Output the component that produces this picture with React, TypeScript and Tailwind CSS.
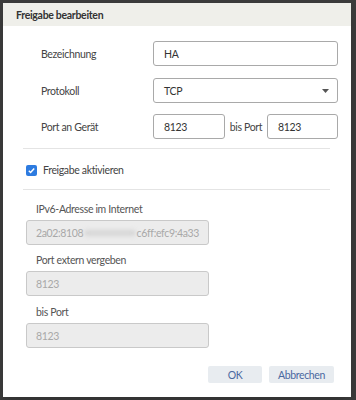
import React from 'react';

const font = { fontFamily: 'Lato, "Open Sans", sans-serif' };

function Field({ value, className = '' }: { value: string; className?: string }) {
  return (
    <div
      className={`flex h-[25px] items-center rounded-[3px] border border-[#a9a9a9] bg-white px-[10px] text-[#333] ${className}`}
    >
      {value}
    </div>
  );
}

function DisabledField({ children }: { children: React.ReactNode }) {
  return (
    <div className="flex h-[25px] w-[183px] items-center rounded-[3px] border border-[#c9c9c9] bg-[#ececec] px-[9px] text-[#a8a8a8]">
      {children}
    </div>
  );
}

export default function App() {
  return (
    <div
      className="h-[400px] w-[356px] bg-[#3b3b3b] p-[3px] pr-[5px] text-[10.5px] leading-[16px] tracking-[-0.35px]"
      style={font}
    >
      <div className="flex h-full flex-col bg-white shadow-lg">
        <div className="flex h-[23px] items-center bg-[#efefea] px-[13px] font-bold tracking-[-0.3px] text-[#333]">
          Freigabe bearbeiten
        </div>

        <div className="flex flex-col pl-[20px] pr-[13px] pt-[15px]">
          <div className="flex items-center">
            <span className="w-[130px] pl-[18px] text-[#444]">Bezeichnung</span>
            <Field value="HA" className="flex-1" />
          </div>
          <div className="mt-[12px] flex items-center">
            <span className="w-[130px] pl-[18px] text-[#444]">Protokoll</span>
            <div className="flex h-[25px] flex-1 items-center justify-between rounded-[3px] border border-[#a9a9a9] bg-white pl-[10px] pr-[8px] text-[#333]">
              TCP
              <svg width="7" height="4" viewBox="0 0 7 4">
                <path d="M0 0h7L3.5 4z" fill="#555" />
              </svg>
            </div>
          </div>
          <div className="mt-[11px] flex items-center">
            <span className="w-[130px] pl-[18px] text-[#444]">Port an Gerät</span>
            <Field value="8123" className="w-[72px]" />
            <span className="w-[42px] text-center text-[#444]">bis Port</span>
            <Field value="8123" className="flex-1" />
          </div>

          <div className="mt-[9px] mr-[8px] border-t border-[#e4e4e4]" />

          <div className="flex h-[40px] items-center gap-[6px] pt-[2px] pl-[3px]">
            <span className="flex h-[11px] w-[11px] items-center justify-center rounded-[2px] bg-[#2d7be0]">
              <svg width="9" height="9" viewBox="0 0 10 10">
                <path d="M2 5.2l2 2 4-4.4" fill="none" stroke="white" strokeWidth="1.6" />
              </svg>
            </span>
            <span className="text-[#444]">Freigabe aktivieren</span>
          </div>

          <div className="mr-[8px] border-t border-[#e4e4e4]" />

          <div className="mt-[11px] pl-[13px] text-[#555]">IPv6-Adresse im Internet</div>
          <div className="mt-[3px] pl-[3px]">
            <DisabledField>
              2a02:8108
              <span className="mx-[1px] inline-block h-[6px] w-[62px] rounded-full bg-[#d6d6d6] blur-[2px]" />
              c6ff:efc9:4a33
            </DisabledField>
          </div>

          <div className="mt-[7px] pl-[13px] text-[#555]">Port extern vergeben</div>
          <div className="mt-[3px] pl-[3px]">
            <DisabledField>8123</DisabledField>
          </div>

          <div className="mt-[8px] pl-[13px] text-[#555]">bis Port</div>
          <div className="mt-[3px] pl-[3px]">
            <DisabledField>8123</DisabledField>
          </div>

          <div className="mt-[18px] flex justify-end gap-[7px] pr-[4px]">
            <button className="h-[17px] w-[54px] rounded-[2px] bg-[#e8ecf0] text-[#4a68a0]">
              OK
            </button>
            <button className="h-[17px] w-[65px] rounded-[2px] bg-[#e8ecf0] text-[#4a68a0]">
              Abbrechen
            </button>
          </div>
        </div>
      </div>
    </div>
  );
}
